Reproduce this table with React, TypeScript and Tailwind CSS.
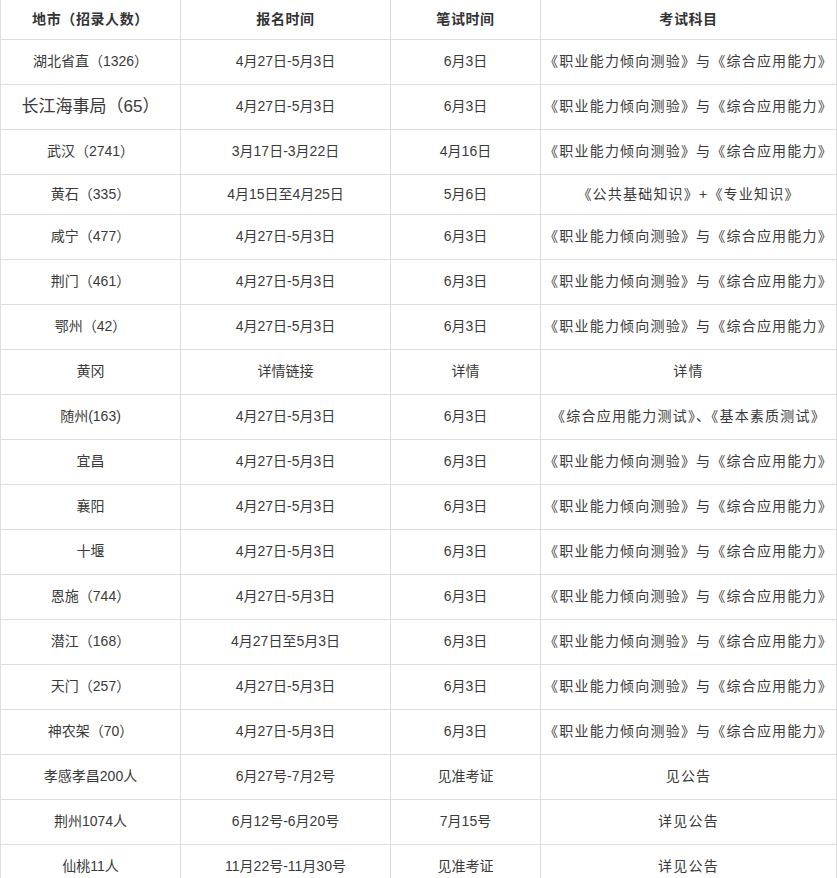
import React from "react";

type Row = { city: string; reg: string; exam: string; subj: string; h?: string; big?: boolean };

const A = "《职业能力倾向测验》与《综合应用能力》";
const rows: Row[] = [
  { city: "湖北省直（1326）", reg: "4月27日-5月3日", exam: "6月3日", subj: A },
  { city: "长江海事局（65）", reg: "4月27日-5月3日", exam: "6月3日", subj: A, big: true },
  { city: "武汉（2741）", reg: "3月17日-3月22日", exam: "4月16日", subj: A },
  { city: "黄石（335）", reg: "4月15日至4月25日", exam: "5月6日", subj: "《公共基础知识》+《专业知识》", h: "h-[40px]" },
  { city: "咸宁（477）", reg: "4月27日-5月3日", exam: "6月3日", subj: A },
  { city: "荆门（461）", reg: "4月27日-5月3日", exam: "6月3日", subj: A },
  { city: "鄂州（42）", reg: "4月27日-5月3日", exam: "6月3日", subj: A },
  { city: "黄冈", reg: "详情链接", exam: "详情", subj: "详情" },
  { city: "随州(163)", reg: "4月27日-5月3日", exam: "6月3日", subj: "《综合应用能力测试》、《基本素质测试》" },
  { city: "宜昌", reg: "4月27日-5月3日", exam: "6月3日", subj: A },
  { city: "襄阳", reg: "4月27日-5月3日", exam: "6月3日", subj: A },
  { city: "十堰", reg: "4月27日-5月3日", exam: "6月3日", subj: A },
  { city: "恩施（744）", reg: "4月27日-5月3日", exam: "6月3日", subj: A },
  { city: "潜江（168）", reg: "4月27日至5月3日", exam: "6月3日", subj: A },
  { city: "天门（257）", reg: "4月27日-5月3日", exam: "6月3日", subj: A },
  { city: "神农架（70）", reg: "4月27日-5月3日", exam: "6月3日", subj: A },
  { city: "孝感孝昌200人", reg: "6月27号-7月2号", exam: "见准考证", subj: "见公告" },
  { city: "荆州1074人", reg: "6月12号-6月20号", exam: "7月15号", subj: "详见公告" },
  { city: "仙桃11人", reg: "11月22号-11月30号", exam: "见准考证", subj: "详见公告" },
];

export default function App() {
  const td = "border border-[#dddddd] text-center align-middle p-0 whitespace-nowrap";
  return (
    <div className="w-[837px] h-[878px] overflow-hidden bg-white text-[#3a3a3a] text-[14px] [font-family:'Liberation_Sans','Noto_Sans_CJK_SC',sans-serif]">
      <table className="table-fixed border-collapse w-[836px]">
        <colgroup>
          <col className="w-[180px]" />
          <col className="w-[210px]" />
          <col className="w-[150px]" />
          <col className="w-[296px]" />
        </colgroup>
        <thead>
          <tr className="h-[39px]">
            <th className={`${td} border-t-0 font-bold text-[#333] tracking-[0.6px]`}>地市（招录人数）</th>
            <th className={`${td} border-t-0 font-bold text-[#333] tracking-[0.6px]`}>报名时间</th>
            <th className={`${td} border-t-0 font-bold text-[#333] tracking-[0.6px]`}>笔试时间</th>
            <th className={`${td} border-t-0 font-bold text-[#333] tracking-[0.6px]`}>考试科目</th>
          </tr>
        </thead>
        <tbody>
          {rows.map((r, i) => (
            <tr key={i} className={r.h ?? "h-[45px]"}>
              <td className={`${td} ${r.big ? "text-[17px]" : ""}`}>{r.city}</td>
              <td className={td}>{r.reg}</td>
              <td className={td}>{r.exam}</td>
              <td className={`${td} tracking-[1.2px]`}>{r.subj}</td>
            </tr>
          ))}
        </tbody>
      </table>
    </div>
  );
}
